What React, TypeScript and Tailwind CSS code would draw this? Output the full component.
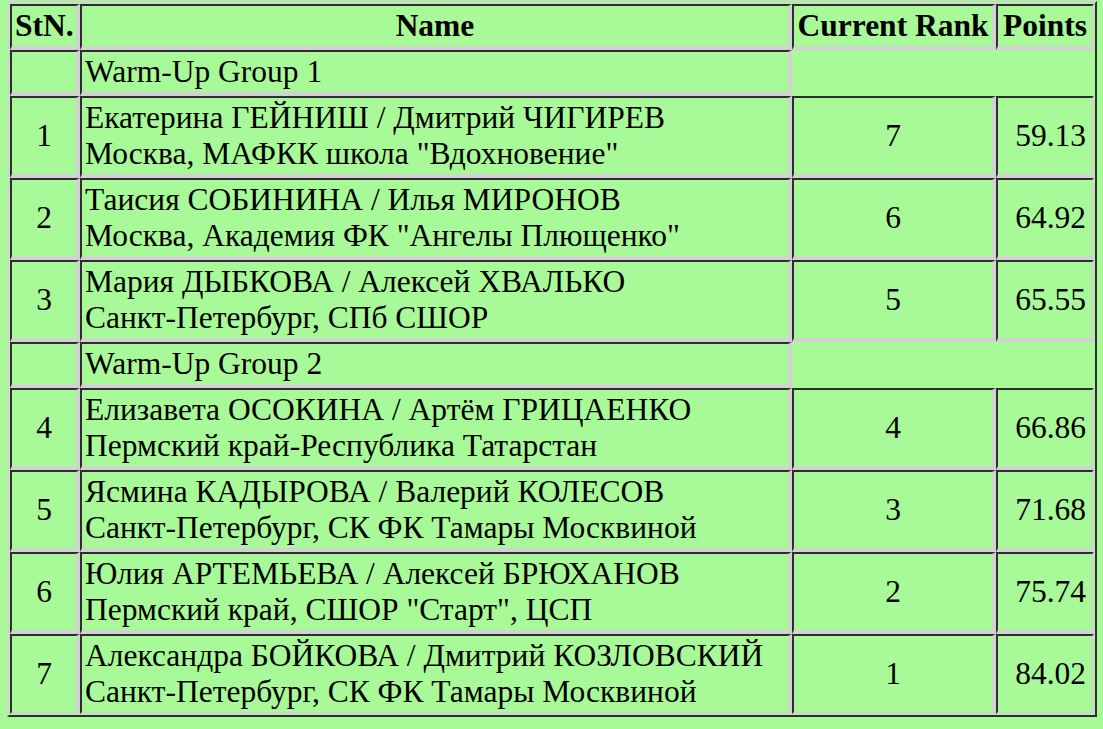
import React from "react";

type Row =
  | { kind: "group"; label: string }
  | { kind: "entry"; n: string; l1: string; l2: string; rank: string; pts: string };

const rows: Row[] = [
  { kind: "group", label: "Warm-Up Group 1" },
  { kind: "entry", n: "1", l1: "Екатерина ГЕЙНИШ / Дмитрий ЧИГИРЕВ", l2: 'Москва, МАФКК школа "Вдохновение"', rank: "7", pts: "59.13" },
  { kind: "entry", n: "2", l1: "Таисия СОБИНИНА / Илья МИРОНОВ", l2: 'Москва, Академия ФК "Ангелы Плющенко"', rank: "6", pts: "64.92" },
  { kind: "entry", n: "3", l1: "Мария ДЫБКОВА / Алексей ХВАЛЬКО", l2: "Санкт-Петербург, СПб СШОР", rank: "5", pts: "65.55" },
  { kind: "group", label: "Warm-Up Group 2" },
  { kind: "entry", n: "4", l1: "Елизавета ОСОКИНА / Артём ГРИЦАЕНКО", l2: "Пермский край-Республика Татарстан", rank: "4", pts: "66.86" },
  { kind: "entry", n: "5", l1: "Ясмина КАДЫРОВА / Валерий КОЛЕСОВ", l2: "Санкт-Петербург, СК ФК Тамары Москвиной", rank: "3", pts: "71.68" },
  { kind: "entry", n: "6", l1: "Юлия АРТЕМЬЕВА / Алексей БРЮХАНОВ", l2: 'Пермский край, СШОР "Старт", ЦСП', rank: "2", pts: "75.74" },
  { kind: "entry", n: "7", l1: "Александра БОЙКОВА / Дмитрий КОЗЛОВСКИЙ", l2: "Санкт-Петербург, СК ФК Тамары Москвиной", rank: "1", pts: "84.02" },
];

export default function App() {
  const last = rows.length - 1;
  const base =
    "border-t-2 border-l-2 border-t-[#2e2e2e] border-l-[#2e2e2e] border-r-[#d2d2d2] border-b-[#d2d2d2] px-[3px] py-[2px] whitespace-nowrap";
  return (
    <div
      className="min-h-screen w-full bg-[#a8fa98] pl-[7px] pt-[1px] text-black"
      style={{ fontFamily: '"Liberation Serif", "Times New Roman", serif' }}
    >
      <table className="w-[1090px] table-fixed border-separate border-spacing-0 border-2 border-t-[#d2d2d2] border-l-[#d2d2d2] border-r-[#2e2e2e] border-b-[#2e2e2e] p-px text-[31.5px] leading-[36px]">
        <colgroup>
          <col className="w-[70px]" />
          <col className="w-[712px]" />
          <col className="w-[204px]" />
          <col className="w-[98px]" />
        </colgroup>
        <thead>
          <tr>
            <th className={`${base} border-r-4 border-b-4 text-center font-bold`}>StN.</th>
            <th className={`${base} border-r-4 border-b-4 text-center font-bold`}>Name</th>
            <th className={`${base} border-r-4 border-b-4 text-center font-bold`}>Current Rank</th>
            <th className={`${base} border-r-2 border-b-4 text-center font-bold`}>Points</th>
          </tr>
        </thead>
        <tbody>
          {rows.map((r, i) => {
            const bb = i === last ? "border-b-2" : "border-b-4";
            if (r.kind === "group") {
              return (
                <tr key={i}>
                  <td className={`${base} border-r-4 ${bb}`}>&nbsp;</td>
                  <td className={`${base} border-r-4 ${bb} text-left`}>{r.label}</td>
                  <td colSpan={2} className="border-0 p-0"></td>
                </tr>
              );
            }
            return (
              <tr key={i}>
                <td className={`${base} border-r-4 ${bb} text-center align-middle`}>{r.n}</td>
                <td className={`${base} border-r-4 ${bb} text-left`}>
                  {r.l1}
                  <br />
                  {r.l2}
                </td>
                <td className={`${base} border-r-4 ${bb} text-center align-middle`}>{r.rank}</td>
                <td className={`${base} border-r-2 ${bb} pr-[6px] text-right align-middle`}>{r.pts}</td>
              </tr>
            );
          })}
        </tbody>
      </table>
    </div>
  );
}
